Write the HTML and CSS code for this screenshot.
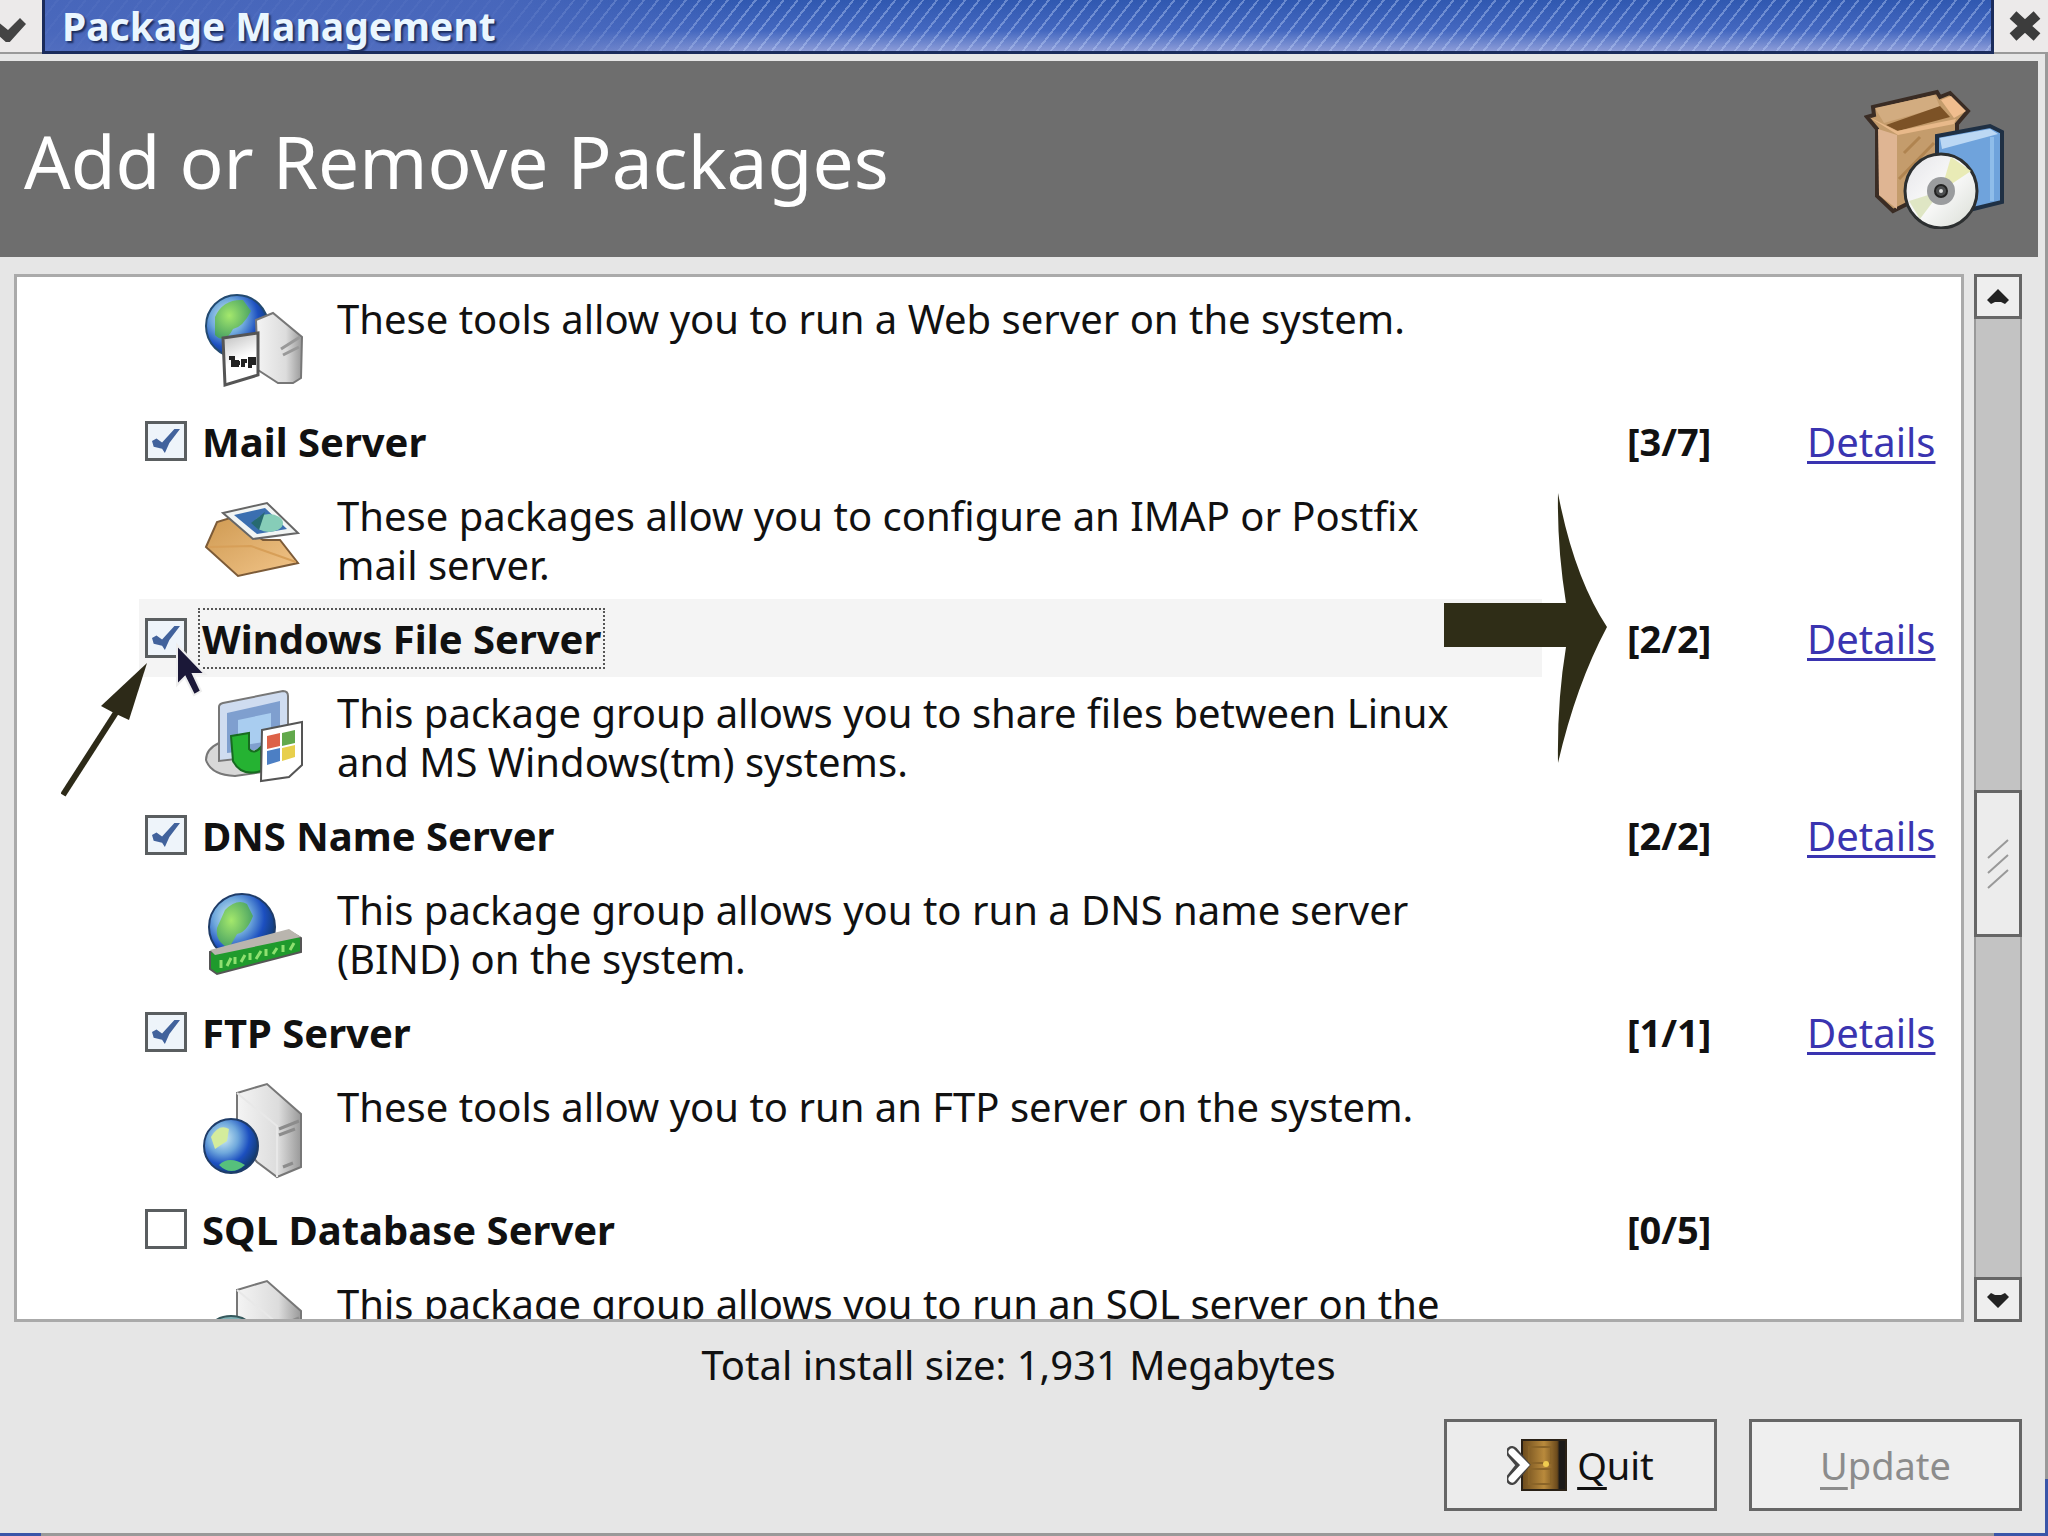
FILE: index.html
```
<!DOCTYPE html>
<html lang="en">
<head>
  <meta charset="UTF-8">
  <title>Package Management</title>
  <link rel="stylesheet" href="styles.css">
</head>
<body>
  <svg class="defs" width="0" height="0" aria-hidden="true">
    <defs>
      <radialGradient id="globe" cx="35%" cy="35%" r="70%">
        <stop offset="0" stop-color="#d4f0f4"/>
        <stop offset="0.4" stop-color="#6fa8dc"/>
        <stop offset="0.7" stop-color="#1c4fc0"/>
        <stop offset="1" stop-color="#123a6a"/>
      </radialGradient>
      <radialGradient id="land" cx="40%" cy="40%" r="70%">
        <stop offset="0" stop-color="#a4e86c"/>
        <stop offset="1" stop-color="#3f9a62"/>
      </radialGradient>
      <linearGradient id="case">
        <stop offset="0" stop-color="#f4f4f4"/>
        <stop offset="0.65" stop-color="#dcdcdc"/>
        <stop offset="1" stop-color="#999"/>
      </linearGradient>
      <linearGradient id="paper" x2="0.3" y2="1">
        <stop offset="0" stop-color="#bbb"/>
        <stop offset="0.6" stop-color="#fff"/>
      </linearGradient>
      <linearGradient id="envelope" y2="1">
        <stop offset="0" stop-color="#cf9a52"/>
        <stop offset="1" stop-color="#f2c58a"/>
      </linearGradient>
      <linearGradient id="door">
        <stop offset="0" stop-color="#6b4a1c"/>
        <stop offset="0.5" stop-color="#b98a3c"/>
        <stop offset="0.8" stop-color="#6b4a1c"/>
        <stop offset="0.85" stop-color="#1c1a18"/>
      </linearGradient>
      <linearGradient id="disc" x2="1" y2="1">
        <stop offset="0" stop-color="#e4e4e8"/>
        <stop offset="0.5" stop-color="#fafafa"/>
        <stop offset="1" stop-color="#d8dcd4"/>
      </linearGradient>
      <symbol id="host" viewBox="0 0 100 100">
        <path d="M34 14L64 5L98 35V88L74 98L54 83L34 60Z" fill="url(#case)" stroke="#777" stroke-width="2"/>
        <path d="M34 14L74 47V98" fill="none" stroke="#e8e8e8" stroke-width="2"/>
        <path d="M76 50L96 42M76 56L92 50M80 88L90 84" stroke="#8c8c8c" stroke-width="3"/>
      </symbol>
    </defs>
  </svg>

  <header class="titlebar">
    <button class="window-button" aria-label="Window menu">
      <svg class="menu-icon" viewBox="0 0 32 32"><path d="M-3 11L8 20L20 8L26 14L8 34L-3 24Z" fill="#444"/></svg>
    </button>
    <div class="window-title">Package Management</div>
    <button class="window-button close" aria-label="Close">
      <svg class="menu-icon" viewBox="0 0 32 32"><path d="M4 5L28 27M28 5L4 27" stroke="#3c3c3c" stroke-width="10"/></svg>
    </button>
  </header>

  <div class="window">
    <div class="banner">
      <h1>Add or Remove Packages</h1>
      <svg class="banner-icon" viewBox="0 0 140 140">
        <path d="M9 18L73 3L76 8L86 4L104 22L93 35V90L29 122L13 107V40L3 28L10 26Z" fill="#c49c6c" stroke="#3a2c24" stroke-width="4"/>
        <path d="M11 19L71 6L76 18L20 34Z" fill="#d2ac80"/>
        <path d="M22 36L76 17L86 28L34 42Z" fill="#7c5226"/>
        <path d="M77 11L87 7L102 22L90 29Z" fill="#f0bd8e"/>
        <path d="M5 28L33 42L92 30L90 35L34 46Z" fill="#e8b98a"/>
        <path d="M14 40L33 46V120L15 106Z" fill="#dfb593"/>
        <path d="M35 90L70 54M40 64L56 48" stroke="#b08450" stroke-width="3"/>
        <path d="M73 47L126 37L138 43V113L109 120L73 100Z" fill="#6fa3dc" stroke="#1f3044" stroke-width="4"/>
        <path d="M76 49L126 40L134 45L78 60Z" fill="#bcd8f4"/>
        <path d="M128 48V112" stroke="#8fbdea" stroke-width="4"/>
        <ellipse cx="77" cy="102" rx="36" ry="37" fill="url(#disc)" stroke="#2c2f30" stroke-width="3"/>
        <path d="M77 102L87 68L107 82Z" fill="#e9ebb6"/>
        <path d="M77 102L45 112L56 130Z" fill="#dfe6c4"/>
        <circle cx="77" cy="102" r="14" fill="#9a9c9e"/>
        <circle cx="77" cy="102" r="6" fill="#4c4e50" stroke="#222" stroke-width="2"/>
        <circle cx="77" cy="102" r="2" fill="#ddd"/>
      </svg>
    </div>

    <main class="content">
      <ul class="packages">
        <li>
          <div class="description">
            <svg class="icon" viewBox="0 0 100 100">
              <circle cx="34" cy="35" r="31" fill="url(#globe)" stroke="#234a70" stroke-width="2"/>
              <path d="M12 26Q20 8 40 9L48 20Q40 36 30 38Q22 54 12 44Z" fill="url(#land)"/>
              <path d="M53 29L70 22L99 46L98 87L90 92H75L55 79Z" fill="url(#case)" stroke="#777" stroke-width="2"/>
              <path d="M78 58L97 46M80 64L96 56" stroke="#999" stroke-width="3"/>
              <path d="M20 47L55 42V84L22 94Z" fill="url(#paper)" stroke="#555" stroke-width="3"/>
              <path d="M26 67H30V76M34 69V76M32 72H37M40 68V76M39 70H44M47 77V68H51V72H47" fill="none" stroke="#222" stroke-width="4"/>
            </svg>
            <p>These tools allow you to run a Web server on the system.</p>
          </div>
        </li>
        <li>
          <div class="heading">
            <input type="checkbox" id="mail" checked>
            <label for="mail">Mail Server</label>
            <span class="count">[3/7]</span>
            <a href="#mail">Details</a>
          </div>
          <div class="description">
            <svg class="icon" viewBox="0 0 100 100">
              <path d="M3 59L14 34L27 30L60 52L77 52L95 75L35 88Z" fill="url(#envelope)" stroke="#7c5b38" stroke-width="2"/>
              <path d="M5 59L48 58L93 74" fill="none" stroke="#d79f58" stroke-width="2"/>
              <path d="M20 25L64 15L95 45L50 51Z" fill="#f2f5f4" stroke="#666" stroke-width="2"/>
              <path d="M31 27L62 20L84 41L54 46Z" fill="#3b6fb0"/>
              <ellipse cx="66" cy="35" rx="14" ry="9" fill="#86cdb8"/>
              <path d="M48 35L62 24L56 42Z" fill="#276a70"/>
            </svg>
            <p>These packages allow you to configure an IMAP or Postfix<br>mail server.</p>
          </div>
        </li>
        <li class="selected">
          <div class="heading">
            <input type="checkbox" id="windows" checked>
            <label for="windows">Windows File Server</label>
            <span class="count">[2/2]</span>
            <a href="#windows">Details</a>
          </div>
          <div class="description">
            <svg class="icon" viewBox="0 0 100 100">
              <path d="M16 58Q3 64 3 75Q8 90 32 91L66 86V60Z" fill="#d8d8d8" stroke="#777" stroke-width="2"/>
              <path d="M16 22Q16 19 20 18L80 6Q85 6 85 11V68L16 76Z" fill="#cfdcf0" stroke="#777" stroke-width="2"/>
              <path d="M24 28L77 16V62L24 68Z" fill="#7f9fcf"/>
              <path d="M35 35L68 28V56L35 61Z" fill="#a9cdf0"/>
              <path d="M28 51L46 48V64Q51 70 58 62V86Q38 92 30 76Z" fill="#25b232" stroke="#176b20" stroke-width="2"/>
              <path d="M59 45L99 37V80L86 92L58 96Z" fill="#fff" stroke="#555" stroke-width="2"/>
              <path d="M64 51L77 48V61L64 64Z" fill="#dd6248"/>
              <path d="M79 48L92 45V58L79 61Z" fill="#62a94c"/>
              <path d="M64 66L77 63V76L64 80Z" fill="#4c7fc4"/>
              <path d="M79 63L92 60V72L79 76Z" fill="#e8cf4c"/>
            </svg>
            <p>This package group allows you to share files between Linux<br>and MS Windows(tm) systems.</p>
          </div>
          <svg class="pointer-arrow" viewBox="0 0 90 140" aria-hidden="true">
            <path d="M2 134L56 50" stroke="#2d2a18" stroke-width="6"/>
            <path d="M86 2L40 45L53 52L68 59Z" fill="#2d2a18"/>
          </svg>
          <svg class="cursor" viewBox="0 0 36 60" aria-hidden="true">
            <path d="M4 4V44L12 36L21 54L28 50L20 33H32Z" fill="#1b1838" stroke="#eee" stroke-width="2"/>
          </svg>
          <svg class="block-arrow" viewBox="0 0 164 272" aria-hidden="true">
            <path d="M0 110H122Q113 54 114 0Q130 84 163 134Q132 192 114 270Q113 208 122 154H0Z" fill="#2f2d17"/>
          </svg>
        </li>
        <li>
          <div class="heading">
            <input type="checkbox" id="dns" checked>
            <label for="dns">DNS Name Server</label>
            <span class="count">[2/2]</span>
            <a href="#dns">Details</a>
          </div>
          <div class="description">
            <svg class="icon" viewBox="0 0 100 100">
              <circle cx="39" cy="45" r="33" fill="url(#globe)" stroke="#1f3c68" stroke-width="2"/>
              <path d="M22 28Q34 16 44 22L50 34Q44 50 34 52L26 66Q12 60 14 46Z" fill="url(#land)"/>
              <path d="M7 70L86 49L98 56V70L14 92L7 87Z" fill="#1f9a2c" stroke="#555" stroke-width="2"/>
              <path d="M7 68L86 47L98 55L12 73Z" fill="#b9b5ae"/>
              <path d="M18 86V78M24 84L28 76M32 82V75M38 80L42 73M47 78V71M53 77L58 69M63 74V67M70 72L74 66M80 70V63M87 68L91 61" stroke="#8fe070" stroke-width="3"/>
            </svg>
            <p>This package group allows you to run a DNS name server<br>(BIND) on the system.</p>
          </div>
        </li>
        <li>
          <div class="heading">
            <input type="checkbox" id="ftp" checked>
            <label for="ftp">FTP Server</label>
            <span class="count">[1/1]</span>
            <a href="#ftp">Details</a>
          </div>
          <div class="description">
            <svg class="icon" viewBox="0 0 100 100">
              <use href="#host"/>
              <circle cx="28" cy="67" r="27" fill="url(#globe)" stroke="#1f3c68" stroke-width="2"/>
              <path d="M8 58Q16 44 26 50L24 62L12 70Z" fill="#d4ec9c"/>
              <path d="M16 86Q26 76 42 86Q28 98 16 86Z" fill="#56c07c"/>
            </svg>
            <p>These tools allow you to run an FTP server on the system.</p>
          </div>
        </li>
        <li>
          <div class="heading">
            <input type="checkbox" id="sql">
            <label for="sql">SQL Database Server</label>
            <span class="count">[0/5]</span>
          </div>
          <div class="description">
            <svg class="icon" viewBox="0 0 100 100">
              <use href="#host"/>
              <ellipse cx="28" cy="52" rx="20" ry="12" fill="#7fb0b4" stroke="#35585c" stroke-width="2"/>
            </svg>
            <p>This package group allows you to run an SQL server on the</p>
          </div>
        </li>
      </ul>
      <div class="scrollbar">
        <button aria-label="Scroll up"><svg viewBox="0 0 24 24"><path d="M12 4L23 15L19 19L15 17H9L5 19L1 15Z" fill="#222"/></svg></button>
        <div class="track">
          <div class="before"></div>
          <div class="thumb">
            <svg viewBox="0 0 24 52"><path d="M2 20L22 2M2 35L22 17M2 50L22 32" stroke="#999" stroke-width="2"/></svg>
          </div>
          <div class="after"></div>
        </div>
        <button aria-label="Scroll down"><svg viewBox="0 0 24 24"><path d="M12 20L23 9L19 5L15 7H9L5 5L1 9Z" fill="#222"/></svg></button>
      </div>
    </main>

    <footer>
      <p class="total">Total install size: 1,931 Megabytes</p>
      <div class="actions">
        <button class="action">
          <svg class="quit-icon" viewBox="0 0 60 52">
            <rect x="15" y="1" width="44" height="50" fill="url(#door)" stroke="#2a2116" stroke-width="2"/>
            <path d="M22 8H44V24H22ZM22 30H44V45H22Z" fill="none" stroke="#8a6428" stroke-width="2"/>
            <circle cx="39" cy="25" r="3" fill="#f0cc50"/>
            <path d="M5 13L16 26L5 40" fill="none" stroke="#444" stroke-width="12" stroke-linecap="round"/>
            <path d="M5 13L18 26L5 40" fill="none" stroke="#fff" stroke-width="7" stroke-linecap="round"/>
          </svg>
          <span><u>Q</u>uit</span>
        </button>
        <button class="action" disabled><span><u>U</u>pdate</span></button>
      </div>
    </footer>
  </div>
  <div class="window-edge"></div>
</body>
</html>
```

FILE: styles.css
```
* {
  box-sizing: border-box;
}

body {
  display: flex;
  flex-direction: column;
  height: 100vh;
  margin: 0;
  overflow: hidden;
  background-color: #3a55a8;
  color: #111;
  font-family: "Noto Sans", sans-serif;
  font-size: 40px;
  line-height: 49px;
}

.defs {
  position: absolute;
}

h1,
p,
ul {
  margin: 0;
  padding: 0;
}

button {
  display: flex;
  align-items: center;
  justify-content: center;
  padding: 0;
  color: #111;
  font: inherit;
}

/* title bar */
.titlebar {
  display: flex;
  height: 54px;
  background-color: #e6e6e6;
}

.window-button {
  width: 42px;
  border: none;
  border-bottom: 2px solid #999;
  background-color: #eceaea;
}

.window-button.close {
  width: 54px;
  padding-left: 8px;
}

.menu-icon {
  width: 32px;
  height: 32px;
}

.window-button:first-child {
  justify-content: flex-start;
}

.window-title {
  flex: 1;
  padding-left: 17px;
  border: 3px solid #1b2c5c;
  border-top: none;
  background:
    linear-gradient(to right, rgba(74, 104, 188, 0.9) 450px, transparent 700px),
    repeating-linear-gradient(128deg, transparent 0 9px, rgba(190, 210, 250, 0.4) 9px 11px),
    linear-gradient(#3058b0, #4468c0 60%, #8c9cd8);
  color: #eaf6ff;
  font-size: 39px;
  font-weight: bold;
  line-height: 52px;
  text-shadow: 2px 2px 2px #1b2c5c;
}

/* window */
.window {
  display: flex;
  flex: 1;
  flex-direction: column;
  min-height: 0;
  padding: 7px 3px 0 0;
  background:
    linear-gradient(#999 calc(100% - 54px), #3a55a8 calc(100% - 54px)) right / 3px 100% no-repeat,
    #e6e6e6;
}

/* the desktop shows at both rounded corners */
.window-edge {
  height: 3px;
  background: linear-gradient(to right, #3a55a8 41px, #999 41px calc(100% - 54px), #3a55a8 calc(100% - 54px));
}

.banner {
  display: flex;
  align-items: center;
  justify-content: space-between;
  height: 196px;
  margin-right: 7px;
  padding: 0 34px 0 24px;
  background-color: #6e6e6e;
}

h1 {
  padding-top: 4px;
  color: #fff;
  font-size: 73px;
  font-weight: normal;
  line-height: 98px;
}

.banner-icon {
  width: 140px;
  height: 140px;
}

.content {
  display: flex;
  flex: 1;
  gap: 10px;
  min-height: 0;
  padding: 17px 23px 0 14px;
}

/* package list */
.packages {
  flex: 1;
  overflow: hidden;
  padding-top: 6px;
  border: 3px solid #aaa;
  background-color: #fff;
  list-style: none;
}

.packages li {
  position: relative;
  padding-left: 122px;
}

.heading {
  display: grid;
  grid-template-columns: 42px 1fr 180px 154px;
  align-items: center;
  height: 78px;
  padding-left: 6px;
  font-weight: bold;
}

.heading label {
  justify-self: start;
  margin-left: 11px;
  padding: 4px 2px;
  border: 2px solid transparent;
}

.count {
  font-size: 38px;
}

.heading a {
  color: #3a34b0;
  font-weight: normal;
  text-decoration-thickness: 3px;
  text-underline-offset: 4px;
}

.selected .heading {
  background: linear-gradient(to right, #f4f4f4 77%, #fff 77%);
}

.selected label {
  border: 2px dotted #555;
}

input[type="checkbox"] {
  appearance: none;
  display: grid;
  place-items: center;
  width: 42px;
  height: 40px;
  margin: 0;
  border: 3px solid #5a5e60;
  background-color: #fff;
}

input[type="checkbox"]:checked {
  background-color: #eef4fa;
}

input[type="checkbox"]:checked::after {
  content: "";
  width: 28px;
  height: 24px;
  background-color: #41629c;
  clip-path: polygon(0 50%, 16% 40%, 36% 56%, 80% 0, 100% 0, 62% 58%, 46% 100%, 36% 82%, 6% 74%);
}

.description {
  display: flex;
  gap: 34px;
  height: 119px;
  padding: 8px 0 0 64px;
}

.description p {
  padding-top: 3px;
  white-space: nowrap;
}

.icon {
  flex: none;
  width: 100px;
  height: 100px;
}

/* pointers drawn over the list */
.pointer-arrow {
  position: absolute;
  top: 62px;
  left: 44px;
  width: 90px;
  height: 140px;
}

.cursor {
  position: absolute;
  top: 42px;
  left: 156px;
  width: 36px;
  height: 60px;
}

.block-arrow {
  position: absolute;
  top: -106px;
  right: 353px;
  width: 164px;
  height: 272px;
}

/* scrollbar */
.scrollbar {
  display: flex;
  flex-direction: column;
  width: 48px;
}

.scrollbar button {
  width: 48px;
  height: 45px;
  border: 3px solid #666;
  background-color: #eee;
}

.scrollbar button svg {
  width: 24px;
  height: 24px;
}

.track {
  display: flex;
  flex: 1;
  flex-direction: column;
  border: solid #999;
  border-width: 0 2px;
  background-color: #c3c3c3;
}

.before {
  flex: 473;
}

.after {
  flex: 341;
}

.thumb {
  display: flex;
  align-items: center;
  justify-content: center;
  height: 147px;
  margin: 0 -2px;
  border: 3px solid #666;
  background-color: #ececec;
}

.thumb svg {
  width: 24px;
  height: 52px;
}

/* footer */
.total {
  padding: 18px 8px 0 0;
  text-align: center;
}

.actions {
  display: flex;
  gap: 32px;
  justify-content: flex-end;
  padding: 30px 23px 22px;
}

.action {
  gap: 10px;
  width: 273px;
  height: 92px;
  border: 3px solid #666;
  background-color: #ececec;
  font-size: 38px;
}

.action:disabled {
  color: #8c8c8c;
  background-color: #efefef;
}

.action u {
  text-decoration-thickness: 3px;
  text-underline-offset: 7px;
  text-decoration-skip-ink: none;
}

.quit-icon {
  width: 60px;
  height: 52px;
}
```
